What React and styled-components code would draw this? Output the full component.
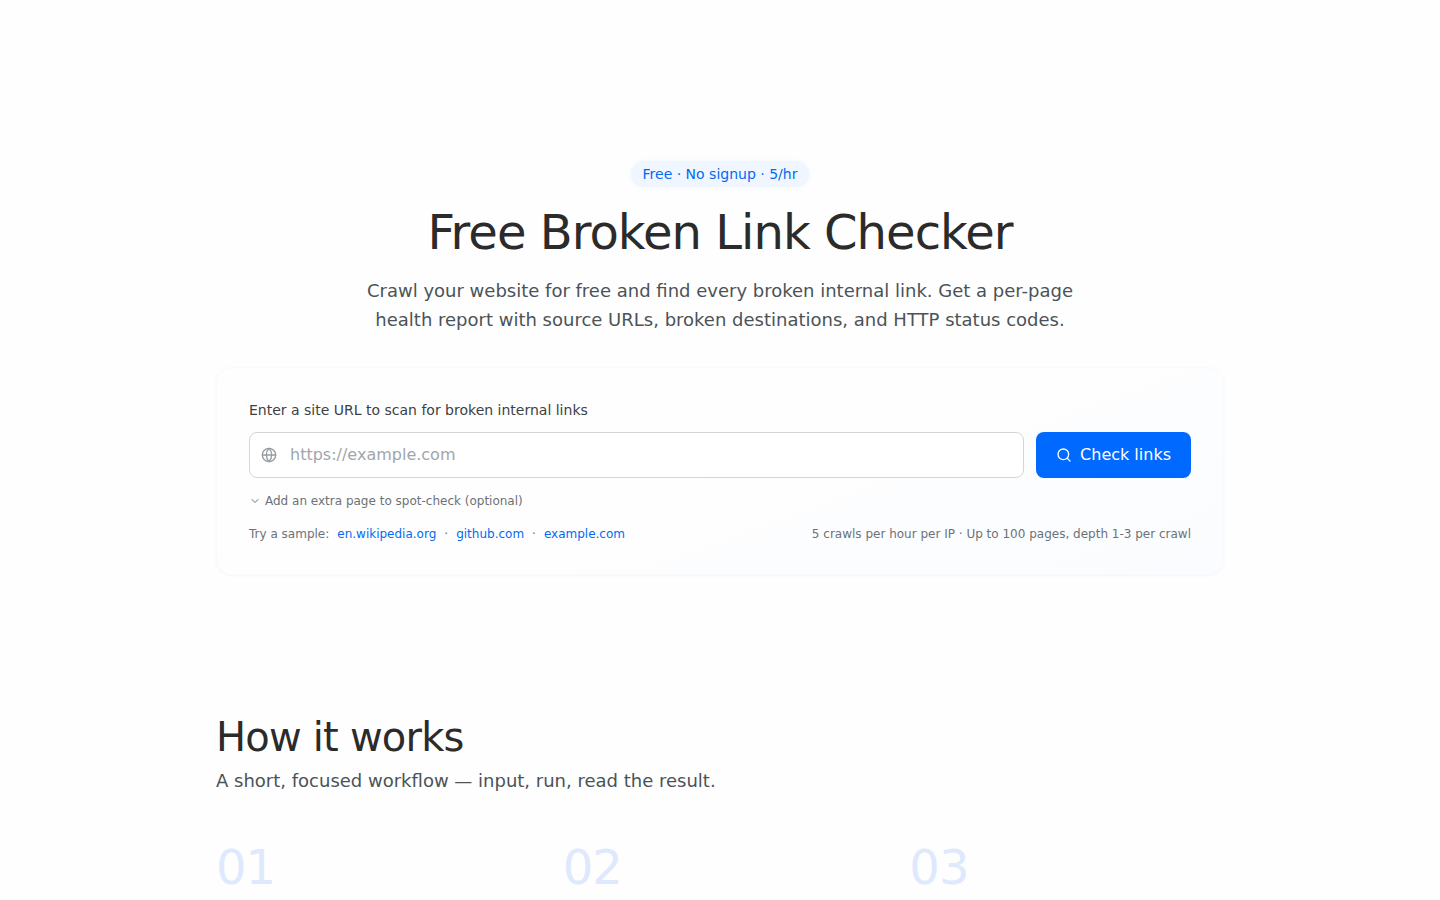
import { useState } from "react";
import styled, { createGlobalStyle } from "styled-components";
import { ChevronDown, Globe, Search } from "lucide-react";

const GlobalStyle = createGlobalStyle`
* {
    box-sizing: border-box;
}
body {
    margin: 0;
    background: #fefefe;
    color: #2b2b2b;
    font-family: "DejaVu Sans", sans-serif;
}
h1, h2, p, ol {
    margin: 0;
    padding: 0;
    font-weight: 400;
}
`;
const Page = styled.main`
width: 70%;
min-width: 320px;
margin: 0 auto;
`;
const Hero = styled.header`
display: flex;
flex-direction: column;
align-items: center;
padding-top: 161px;
text-align: center;
`;
const Badge = styled.span`
padding: 3px 12px;
border-radius: 13px;
background: #f0f6ff;
box-shadow: 0 0 6px #f1f7ff;
color: #006bf2;
font-size: 14px;
line-height: 20px;
`;
const Title = styled.h1`
margin-top: 16px;
font-size: 48px;
line-height: 58px;
letter-spacing: -0.02em;
`;
const Lead = styled.p`
max-width: 720px;
margin-top: 15px;
color: #4b5358;
font-size: 18px;
line-height: 29px;
`;
const Card = styled.form`
display: flex;
flex-direction: column;
margin-top: 33px;
padding: 32px 32px 31px;
border: 1px solid #f9fafb;
border-radius: 16px;
background: linear-gradient(160deg, #fefefe 50%, #fafcff 100%);
box-shadow: 0 1px 3px rgba(0, 0, 0, 0.04);
`;
const Label = styled.label`
color: #3c4146;
font-size: 14px;
line-height: 20px;
`;
const SearchRow = styled.div`
display: flex;
gap: 12px;
margin-top: 12px;
`;
const Field = styled.div`
display: flex;
flex: 1;
align-items: center;
gap: 13px;
height: 46px;
padding: 0 11px;
border: 1px solid #d3d6d9;
border-radius: 8px;
background: #fff;
color: #959ca3;
&:focus-within {
    border-color: #0069ff;
}
`;
const UrlInput = styled.input`
flex: 1;
min-width: 0;
padding: 0;
border: 0;
outline: 0;
background: transparent;
color: #2b2b2b;
font: inherit;
font-size: 16px;
line-height: 24px;
&::placeholder {
    color: #a0a6ab;
    opacity: 1;
}
`;
const SubmitButton = styled.button`
display: flex;
align-items: center;
gap: 8px;
padding: 0 20px;
border: 0;
border-radius: 8px;
background: #0069ff;
color: #fff;
font: inherit;
font-size: 16px;
line-height: 24px;
cursor: pointer;
`;
const ToggleButton = styled.button`
display: flex;
align-self: flex-start;
align-items: center;
gap: 4px;
margin-top: 14px;
padding: 0;
border: 0;
background: transparent;
color: #6c7278;
font: inherit;
font-size: 12px;
line-height: 18px;
cursor: pointer;
svg {
    transform: ${(props) => (props.$open ? "rotate(180deg)" : "none")};
}
`;
const CardFooter = styled.div`
display: flex;
flex-wrap: wrap;
justify-content: space-between;
margin-top: 15px;
color: #6c7278;
font-size: 12px;
line-height: 18px;
`;
const Samples = styled.div`
display: flex;
gap: 8px;
`;
const SampleLink = styled.a`
color: #006bf2;
text-decoration: none;
`;
const Section = styled.section`
padding-top: 140px;
`;
const SectionTitle = styled.h2`
font-size: 40px;
line-height: 44px;
letter-spacing: -0.02em;
`;
const SectionText = styled.p`
margin-top: 7px;
color: #4b5358;
font-size: 18px;
line-height: 29px;
`;
const Steps = styled.ol`
display: grid;
grid-template-columns: repeat(3, 1fr);
gap: 32px;
margin-top: 48px;
list-style: none;
`;
const StepNumber = styled.li`
color: #dfe9fd;
font-size: 48px;
line-height: 48px;
letter-spacing: -0.02em;
`;

const samples = ["en.wikipedia.org", "github.com", "example.com"];
const steps = ["01", "02", "03"];

const App = () => {
    const [url, setUrl] = useState("");
    const [showExtra, setShowExtra] = useState(false);
    const [extraUrl, setExtraUrl] = useState("");

    const handleSample = (event, host) => {
        event.preventDefault();
        setUrl(`https://${host}`);
    };

    return (
        <Page>
            <GlobalStyle />
            <Hero>
                <Badge>Free · No signup · 5/hr</Badge>
                <Title>Free Broken Link Checker</Title>
                <Lead>
                    Crawl your website for free and find every broken internal link. Get a per-page
                    health report with source URLs, broken destinations, and HTTP status codes.
                </Lead>
            </Hero>
            <Card onSubmit={(event) => event.preventDefault()}>
                <Label htmlFor="siteUrl">Enter a site URL to scan for broken internal links</Label>
                <SearchRow>
                    <Field>
                        <Globe size={16} />
                        <UrlInput id="siteUrl" name="siteUrl" type="url" placeholder="https://example.com" value={url} onChange={(event) => setUrl(event.target.value)} />
                    </Field>
                    <SubmitButton type="submit">
                        <Search size={16} />
                        Check links
                    </SubmitButton>
                </SearchRow>
                <ToggleButton type="button" $open={showExtra} aria-expanded={showExtra} onClick={() => setShowExtra(!showExtra)}>
                    <ChevronDown size={12} />
                    Add an extra page to spot-check (optional)
                </ToggleButton>
                {showExtra && (
                    <SearchRow>
                        <Field>
                            <UrlInput name="extraUrl" type="url" aria-label="Extra page" value={extraUrl} onChange={(event) => setExtraUrl(event.target.value)} />
                        </Field>
                    </SearchRow>
                )}
                <CardFooter>
                    <Samples>
                        <span>Try a sample:</span>
                        {samples.map((host, index) => [
                            index > 0 && <span key={`dot-${host}`}>·</span>,
                            <SampleLink key={host} href={`https://${host}`} onClick={(event) => handleSample(event, host)}>{host}</SampleLink>
                        ])}
                    </Samples>
                    <span>5 crawls per hour per IP · Up to 100 pages, depth 1-3 per crawl</span>
                </CardFooter>
            </Card>
            <Section>
                <SectionTitle>How it works</SectionTitle>
                <SectionText>A short, focused workflow — input, run, read the result.</SectionText>
                <Steps>
                    {steps.map((step) => <StepNumber key={step}>{step}</StepNumber>)}
                </Steps>
            </Section>
        </Page>
    );
};

export default App;
